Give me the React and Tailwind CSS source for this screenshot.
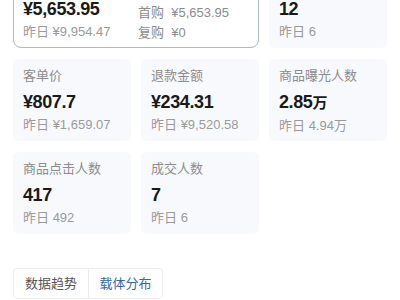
export default function App() {
  const font = { fontFamily: '"Liberation Sans", "Noto Sans CJK SC", sans-serif' };
  const Card = ({ label, value, unit, prev, hideLabel }) => (
    <div className="h-[82px] rounded-[6px] bg-[#f8f9fc] pl-[10px] pt-[10px]">
      <div className="h-[14px] text-[13px] leading-[14px] text-[#8c8c8c]">{hideLabel ? "" : label}</div>
      <div className="mt-[9px] flex items-baseline text-[18px] leading-[20px] font-bold tracking-[-0.4px] text-[#1a1a1a]">
        {value}
        {unit && <span className="text-[15px]">{unit}</span>}
      </div>
      <div className="mt-[5px] text-[13px] leading-[16px] text-[#9a9a9a]">
        昨日 {prev}
      </div>
    </div>
  );
  return (
    <div className="w-[400px] h-[300px] overflow-hidden bg-white" style={font}>
      <div className="-mt-[34px] px-[13px]">
        <div className="grid grid-cols-3 gap-x-[10px] gap-y-[11px]">
          <div className="col-span-2 flex h-[82px] rounded-[8px] border border-[#a9b9cc] bg-white">
            <div className="w-[115px] pl-[9px] pt-[9px]">
              <div className="h-[14px]"></div>
              <div className="mt-[9px] text-[18px] leading-[20px] font-bold tracking-[-0.4px] text-[#1a1a1a]">¥5,653.95</div>
              <div className="mt-[5px] text-[13px] leading-[16px] text-[#9a9a9a]">昨日 ¥9,954.47</div>
            </div>
            <div className="pl-[9px] pt-[36px] text-[13px] leading-[20px] text-[#8c8c8c]">
              <div>首购&nbsp; ¥5,653.95</div>
              <div>复购&nbsp; ¥0</div>
            </div>
          </div>
          <Card hideLabel label="成交订单数" value="12" prev="6" />
          <Card label="客单价" value="¥807.7" prev="¥1,659.07" />
          <Card label="退款金额" value="¥234.31" prev="¥9,520.58" />
          <Card label="商品曝光人数" value="2.85" unit="万" prev="4.94万" />
          <Card label="商品点击人数" value="417" prev="492" />
          <Card label="成交人数" value="7" prev="6" />
        </div>
        <div className="mt-[34px] flex w-[150px] h-[31px] rounded-[4px] border border-[#ececec] text-[13px]">
          <div className="flex w-[75px] items-center justify-center border-r border-[#ececec] text-[#555]">数据趋势</div>
          <div className="flex flex-1 items-center justify-center text-[#3368ad]">载体分布</div>
        </div>
      </div>
    </div>
  );
}
